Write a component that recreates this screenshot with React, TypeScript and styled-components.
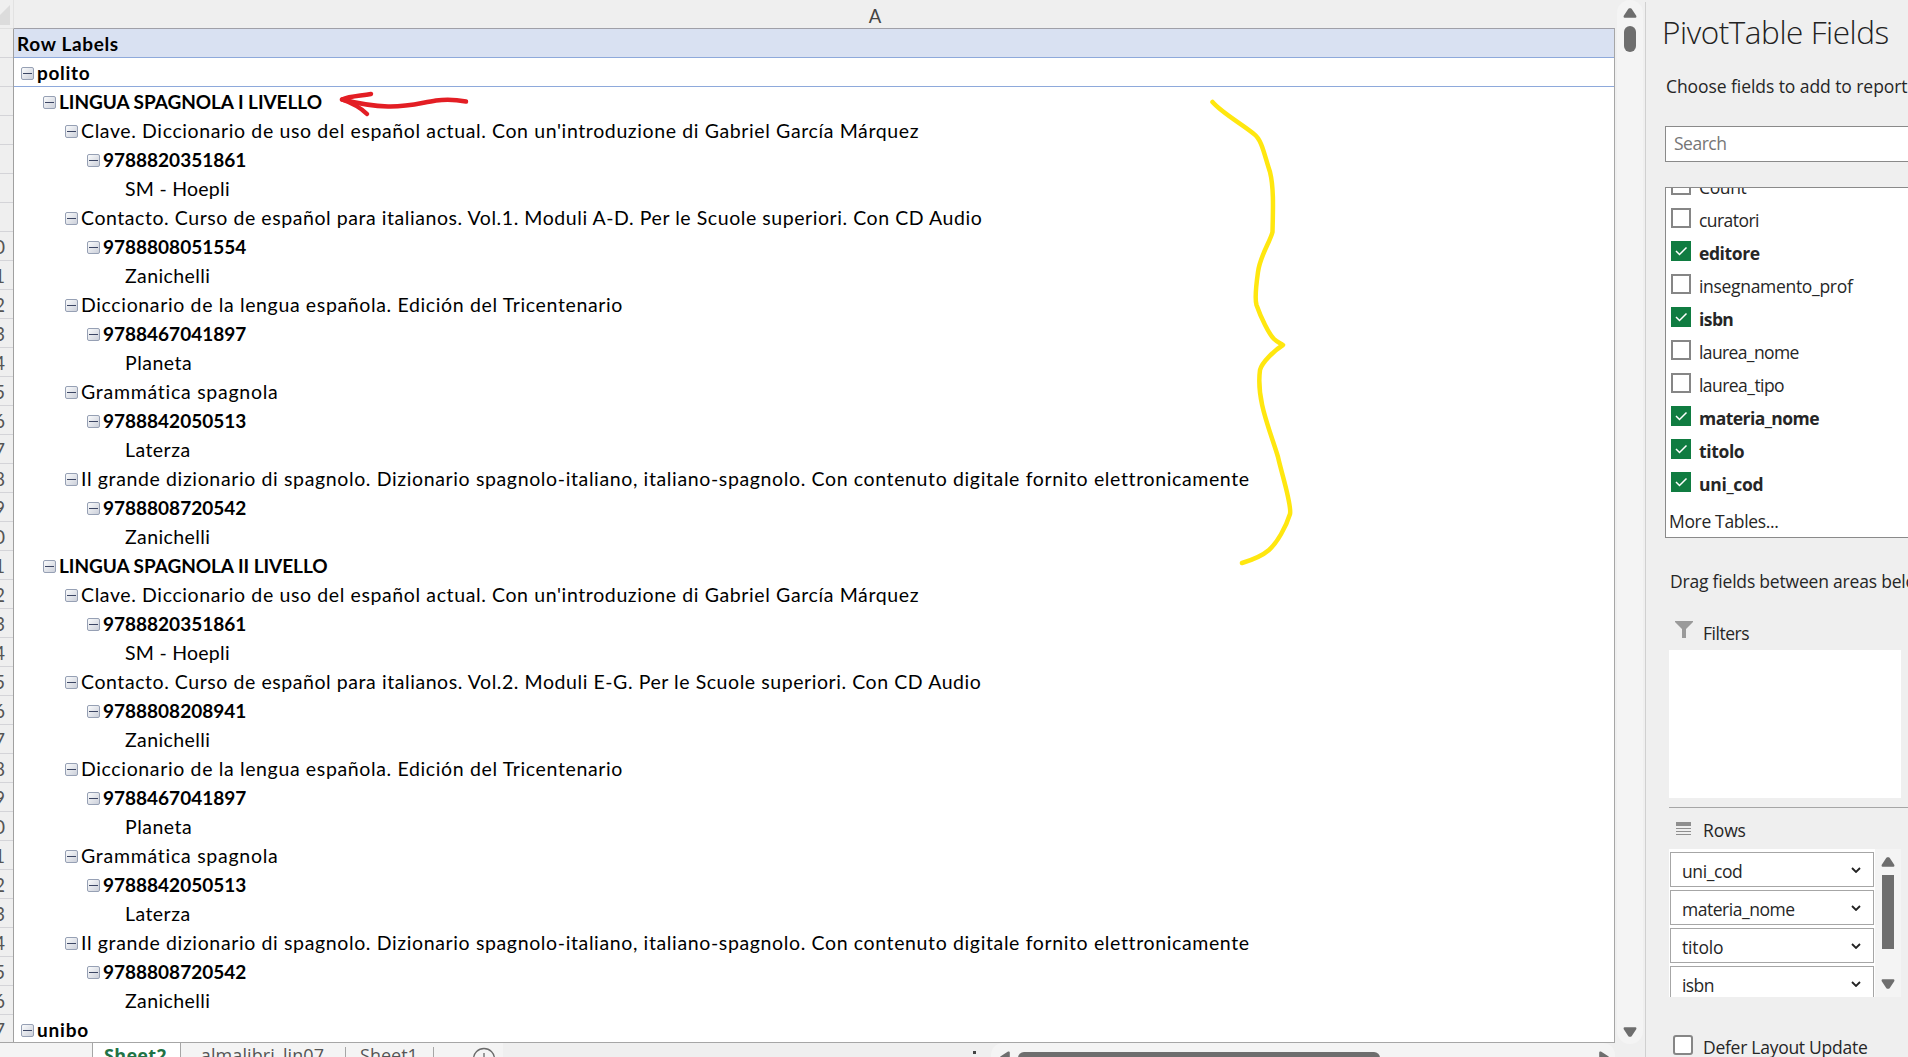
import React from "react";
import styled, { createGlobalStyle } from "styled-components";

const Global = createGlobalStyle`
  *{box-sizing:border-box}
  html,body{margin:0;padding:0;overflow:hidden;background:#efefef}
`;

const UI = `"Open Sans","Noto Sans",sans-serif`;
const GRID = `Lato,"Open Sans",sans-serif`;

const Screen = styled.div`
  width: 1908px; height: 1057px; overflow: hidden; display: flex;
  background: #efefef; color: #262626; font-family: ${UI}; position: relative;
`;
const Workbook = styled.main`
  width: 1615px; height: 1057px; display: flex; flex-direction: column; flex: none;
`;
const Sheet = styled.div`
  display: grid; grid-template-columns: 14px 1fr; grid-template-rows: 28px 1fr; height: 1043px; flex: none;
  border-bottom: 1px solid #a6a6a6;
`;
const Corner = styled.div`
  border-right: 1px solid #e2e2e2; display: flex; align-items: flex-end; overflow: hidden;
  padding-bottom: 3px;
  svg { display: block; }
`;
const ColumnHead = styled.div`
  display: flex; justify-content: center; align-items: center;
  font: 400 18.5px/28px ${GRID}; color: #444; padding: 4px 0 0 121px;
`;
const Numbers = styled.div`
  border-right: 1px solid #a0a0a0; border-top: 1px solid #e0e0e0; overflow: hidden;
`;
const RowNumber = styled.div`
  height: 29px; border-bottom: 1px solid #d4d4d8; display: flex; justify-content: flex-end;
  padding-right: 8px; font: 400 19px/30px ${GRID}; color: #555;
`;
const Cells = styled.div`
  background: #fff; border-top: 1px solid #a0a0a8; border-right: 1px solid #a6a6a6; overflow: hidden;
`;
const Row = styled.div<{ $indent: number; $head?: boolean; $ruled?: boolean }>`
  height: 29px; display: flex; align-items: center; white-space: nowrap; color: #000;
  padding-left: ${(p) => p.$indent}px;
  background: ${(p) => (p.$head ? "#d9e1f2" : "#fff")};
  border-bottom: 1px solid ${(p) => (p.$ruled ? "#8ea9db" : "transparent")};
`;
const Toggle = styled.span`
  width: 13px; height: 13px; flex: none; margin: 3px 3px 0 0; border: 1px solid #96a0b4; border-radius: 2px;
  background: linear-gradient(135deg, #fafbfc, #ccd0da);
  display: flex; align-items: center; justify-content: center;
  &::after { content: ""; width: 9px; height: 1px; background: #3c4664; }
`;
const Label = styled.span<{ $bold?: boolean; $track?: number }>`
  font: ${(p) => (p.$bold ? "700 19px" : "400 19.5px")}/29px ${GRID};
  letter-spacing: ${(p) => p.$track ?? 0}px; padding-top: 1px;
`;

const TabBar = styled.div`
  height: 14px; display: flex; overflow: hidden; font-size: 18px; line-height: 25px; color: #555;
`;
const NavArrows = styled.div`
  width: 93px; background: #f4f4f4; border-right: 1px solid #a6a6a6; padding-left: 4px; flex: none;
`;
const ActiveTab = styled.div`
  width: 88px; margin-top: -1px; background: #fff; flex: none; border-right: 1px solid #a6a6a6;
  color: #217346; font-weight: 700; display: flex; justify-content: center; letter-spacing: 0.3px;
  padding: 1px 2px 0 0;
`;
const Tab = styled.div<{ $w: number; $track: number }>`
  width: ${(p) => p.$w}px; flex: none; background: #f4f4f4; display: flex; justify-content: center;
  letter-spacing: ${(p) => p.$track}px; position: relative; padding-right: 2px;
  &::after { content: ""; position: absolute; right: 0; top: 4px; bottom: 0; width: 1px; background: #a6a6a6; }
`;
const AddSheet = styled.div`
  width: 69px; background: #f4f4f4; padding: 4px 0 0 38px; flex: none;
  svg { display: block; }
`;
const Dots = styled.div`
  width: 488px; display: flex; justify-content: flex-end; padding: 8px 15px 0 0; flex: none;
  &::after { content: ""; width: 3px; height: 3px; background: #444; }
`;
const HScroll = styled.div`
  width: 624px; flex: none; background: #f4f4f4; border-radius: 12px 12px 0 0; display: flex; padding: 8px 6px 0 9px;
  svg { flex: none; display: block; }
`;
const HThumb = styled.div`
  width: 362px; height: 12px; margin: 1px auto 0 8px; background: #6e6e6e; border-radius: 6px;
`;

const VScroll = styled.div`
  width: 26px; height: 1044px; margin: 0 2px; border-radius: 13px; background: #f4f4f4; flex: none;
  display: flex; flex-direction: column; align-items: center; padding: 8px 0 7px;
  svg { display: block; flex: none; }
`;
const VThumb = styled.div<{ $h: number; $round?: boolean }>`
  width: 12px; height: ${(p) => p.$h}px; margin: 8px 0 auto; background: #6e6e6e;
  border-radius: ${(p) => (p.$round ? 6 : 0)}px; flex: none;
`;

const Pane = styled.aside`
  width: 263px; height: 1055px; margin-top: 2px; border-left: 1px solid #d0d0d0; flex: none;
  display: flex; flex-direction: column; overflow: hidden; padding-left: 19px; white-space: nowrap;
`;
const Title = styled.h1`
  margin: 6px 0 0 -3px; height: 48px; font: 300 31.5px/48px ${UI}; letter-spacing: -0.45px; flex: none; color: #222;
`;
const Hint = styled.p<{ $top: number; $left: number; $track: number }>`
  margin: ${(p) => p.$top}px 0 0 ${(p) => p.$left}px; font-size: 17.5px; line-height: 26px; height: 26px;
  letter-spacing: ${(p) => p.$track}px; flex: none;
`;
const Search = styled.div`
  margin-top: 27px; height: 36px; border: 1px solid #8a8a8a; border-right: 0; background: #fff; color: #767676;
  padding-left: 8px; font-size: 17.5px; line-height: 33px; letter-spacing: -0.5px; flex: none;
`;
const FieldList = styled.div`
  margin-top: 25px; height: 351px; border: 1px solid #8a8a8a; border-right: 0; background: #fff; flex: none;
  overflow: hidden; padding-left: 5px;
`;
const FieldScroll = styled.div` margin-top: -13px; `;
const Field = styled.div<{ $on?: boolean; $track: number }>`
  height: 33px; display: flex; align-items: flex-start; font-size: 17.5px; line-height: 25px;
  font-weight: ${(p) => (p.$on ? 700 : 400)}; letter-spacing: ${(p) => p.$track}px;
`;
const Box = styled.span<{ $on?: boolean; $round?: boolean }>`
  width: 20px; height: 20px; flex: none; margin-right: 8px;
  border: ${(p) => (p.$on ? "0" : "2px solid #868686")}; background: ${(p) => (p.$on ? "#107c41" : "#fff")};
  border-radius: ${(p) => (p.$round ? 3 : 0)}px;
  svg { display: block; }
`;
const MoreTables = styled.div`
  font-size: 17.5px; line-height: 26px; letter-spacing: -0.34px; margin: 3px 0 0 -2px;
`;
const AreaHead = styled.div<{ $top: number; $track: number }>`
  margin: ${(p) => p.$top}px 0 0 9px; height: 26px; display: flex; align-items: flex-start; flex: none;
  font-size: 17.5px; line-height: 26px; letter-spacing: ${(p) => p.$track}px;
  svg { display: block; width: 20px; margin-right: 9px; flex: none; }
`;
const DropZone = styled.div`
  margin: 4px 0 0 4px; width: 232px; height: 148px; background: #fff; flex: none;
`;
const Divider = styled.div`
  margin: 9px 0 0 4px; height: 1px; background: #a6a6a6; flex: none;
`;
const RowArea = styled.div`
  margin: 6px 0 0 4px; width: 232px; height: 148px; display: flex; overflow: hidden; background: #f4f4f4; flex: none;
`;
const Items = styled.div`
  width: 206px; background: #fff; padding: 3px 1px; display: flex; flex-direction: column; gap: 3px;
`;
const Item = styled.div<{ $track: number }>`
  height: 35px; border: 1px solid #a6a6a6; display: flex; align-items: center; justify-content: space-between;
  padding: 2px 12px 0 11px; font-size: 17.5px; letter-spacing: ${(p) => p.$track}px; flex: none;
  svg { display: block; margin-top: -2px; }
`;
const AreaScroll = styled.div`
  width: 26px; display: flex; flex-direction: column; align-items: center; padding: 8px 0 8px;
  svg { display: block; flex: none; }
`;
const Defer = styled.label`
  display: flex; margin: 38px 0 0 8px; font-size: 17.5px; line-height: 26px; letter-spacing: -0.27px; flex: none;
  height: 20px; span + span { margin: -1px 0 0 2px; }
`;
const Ink = styled.svg`
  position: absolute; left: 0; top: 0; pointer-events: none;
`;

const Tri = ({ dir }: { dir: "up" | "down" | "left" | "right" }) => {
  const turn = { up: 0, right: 90, down: 180, left: 270 }[dir];
  const flat = dir === "up" || dir === "down";
  return (
    <svg width={flat ? 14 : 10} height={flat ? 10 : 14} viewBox={flat ? "0 0 14 10" : "0 0 10 14"}>
      <path d="M-0.8-3.8H0.8L5.400 3.200V3.800H-5.400V3.200Z" fill="#6e6e6e" stroke="#6e6e6e" strokeWidth="2" strokeLinejoin="round"
        transform={`translate(${flat ? "7 5" : "5 7"}) rotate(${turn})`} />
    </svg>
  );
};

type Line = { t: string; l: number; k?: number };

const course = (name: string, vol: Line, isbn: string): Line[] => [
  { t: name, l: 1, k: -0.05 },
  { t: "Clave. Diccionario de uso del español actual. Con un'introduzione di Gabriel García Márquez", l: 2, k: 0.615 },
  { t: "9788820351861", l: 3 },
  { t: "SM - Hoepli", l: 4, k: 0.25 },
  vol,
  { t: isbn, l: 3 },
  { t: "Zanichelli", l: 4, k: 0.4 },
  { t: "Diccionario de la lengua española. Edición del Tricentenario", l: 2, k: 0.64 },
  { t: "9788467041897", l: 3 },
  { t: "Planeta", l: 4, k: 0.5 },
  { t: "Grammática spagnola", l: 2, k: 0.74 },
  { t: "9788842050513", l: 3 },
  { t: "Laterza", l: 4, k: 0.45 },
  { t: "Il grande dizionario di spagnolo. Dizionario spagnolo-italiano, italiano-spagnolo. Con contenuto digitale fornito elettronicamente", l: 2, k: 0.63 },
  { t: "9788808720542", l: 3 },
  { t: "Zanichelli", l: 4, k: 0.4 },
];

const rows: Line[] = [
  { t: "polito", l: 0, k: 0.7 },
  ...course(
    "LINGUA SPAGNOLA I LIVELLO",
    { t: "Contacto. Curso de español para italianos. Vol.1. Moduli A-D. Per le Scuole superiori. Con CD Audio", l: 2, k: 0.56 },
    "9788808051554"
  ),
  ...course(
    "LINGUA SPAGNOLA II LIVELLO",
    { t: "Contacto. Curso de español para italianos. Vol.2. Moduli E-G. Per le Scuole superiori. Con CD Audio", l: 2, k: 0.565 },
    "9788808208941"
  ),
  { t: "unibo", l: 0, k: 0.8 },
];

const fields: { t: string; on?: boolean; k: number }[] = [
  { t: "Count", k: -0.35 },
  { t: "curatori", k: -0.55 },
  { t: "editore", on: true, k: -0.4 },
  { t: "insegnamento_prof", k: -0.31 },
  { t: "isbn", on: true, k: -0.58 },
  { t: "laurea_nome", k: -0.62 },
  { t: "laurea_tipo", k: -0.55 },
  { t: "materia_nome", on: true, k: -0.55 },
  { t: "titolo", on: true, k: -0.37 },
  { t: "uni_cod", on: true, k: -0.3 },
];

const items = [
  { t: "uni_cod", k: -0.4 },
  { t: "materia_nome", k: -0.47 },
  { t: "titolo", k: -0.15 },
  { t: "isbn", k: -0.6 },
];

export default function App() {
  return (
    <Screen>
      <Global />
      <Workbook>
        <Sheet>
          <Corner><svg width="10" height="20"><path d="M10 0V20H0V10Z" fill="#dcdcdc" /></svg></Corner>
          <ColumnHead>A</ColumnHead>
          <Numbers>
            {Array.from({ length: 35 }, (_, i) => (
              <RowNumber key={i}>{i > 6 ? i + 3 : ""}</RowNumber>
            ))}
          </Numbers>
          <Cells>
            <Row $indent={3} $head $ruled><Label $bold $track={0.65}>Row Labels</Label></Row>
            {rows.map((r, i) => (
              <Row key={i} $indent={r.l < 4 ? 7 + r.l * 22 : 111} $ruled={i === 0}>
                {r.l < 4 && <Toggle />}
                <Label $bold={r.l !== 2 && r.l !== 4} $track={r.k}>{r.t}</Label>
              </Row>
            ))}
          </Cells>
        </Sheet>
        <TabBar>
          <NavArrows>
            <svg width="50" height="14"><path d="M5 10v6L1 14ZM34 10v6h6Z" fill="#bbb" /></svg>
          </NavArrows>
          <ActiveTab>Sheet2</ActiveTab>
          <Tab $w={165} $track={0.1}>almalibri_lin07</Tab>
          <Tab $w={88} $track={0}>Sheet1</Tab>
          <AddSheet>
            <svg width="24" height="24" fill="none" stroke="#6a6a6a" strokeWidth="1.3"><circle cx="12" cy="12" r="10.5" /><path d="M12 6v12M6 12h12" /></svg>
          </AddSheet>
          <Dots />
          <HScroll><Tri dir="left" /><HThumb /><Tri dir="right" /></HScroll>
        </TabBar>
      </Workbook>
      <VScroll><Tri dir="up" /><VThumb $h={26} $round /><Tri dir="down" /></VScroll>
      <Pane>
        <Title>PivotTable Fields</Title>
        <Hint $top={17} $left={1} $track={-0.07}>Choose fields to add to report:</Hint>
        <Search>Search</Search>
        <FieldList>
          <FieldScroll>
            {fields.map((f) => (
              <Field key={f.t} $on={f.on} $track={f.k}>
                <Box $on={f.on}>
                  {f.on && <svg width="20" height="20" fill="none" stroke="#fff" strokeWidth="1.5"><path d="M5 10 8.500 13.500 15.500 6.500" /></svg>}
                </Box>
                {f.t}
              </Field>
            ))}
          </FieldScroll>
          <MoreTables>More Tables...</MoreTables>
        </FieldList>
        <Hint $top={30} $left={5} $track={-0.2}>Drag fields between areas below:</Hint>
        <AreaHead $top={26} $track={-0.47}>
          <svg width="20" height="18"><path d="M1 1H19V2L12 9V18H8V9L1 2Z" fill="#9a9a9a" /></svg>
          Filters
        </AreaHead>
        <DropZone />
        <Divider />
        <AreaHead $top={9} $track={-0.1}>
          <svg width="20" height="18"><path d="M2 5H17V9H2ZM2 11H17V12H2ZM2 14H17V15H2ZM2 17H17V18H2Z" fill="#8f8f8f" /></svg>
          Rows
        </AreaHead>
        <RowArea>
          <Items>
            {items.map((it) => (
              <Item key={it.t} $track={it.k}>
                {it.t}
                <svg width="10" height="6" fill="none" stroke="#222" strokeWidth="1.8"><path d="M1 1 5 5 9 1" /></svg>
              </Item>
            ))}
          </Items>
          <AreaScroll><Tri dir="up" /><VThumb $h={74} /><Tri dir="down" /></AreaScroll>
        </RowArea>
        <Defer><Box $round /><span>Defer Layout Update</span></Defer>
      </Pane>
      <Ink width="1400" height="600" fill="none" strokeLinecap="round" strokeLinejoin="round">
        <g stroke="#e31e24" strokeWidth="4.5">
          <path d="M342 99.500C356 103 370 106 388 106.500C408 107 420 103 436 100.500C448 99 458 100 466 101.500" />
          <path d="M371 94C360 96 350 96 342 99.500C352 103 360 107 367 114" />
        </g>
        <path stroke="#ffe70f" strokeWidth="4.500" d="M1212.500 102C1222 113 1242 124 1254 134C1262 140 1264 154 1270 172C1274 188 1273 210 1272.500 232C1270 242 1260 256 1258 272C1256 286 1255 300 1256.500 305C1261 318 1269 334 1274 339C1277 342 1280 343 1283 345C1275 350 1262 362 1260 370C1256 400 1270 430 1278 457C1282 475 1292 505 1290 514C1286 527 1277 543 1269 550C1262 556 1252 560 1242 563" />
      </Ink>
    </Screen>
  );
}
